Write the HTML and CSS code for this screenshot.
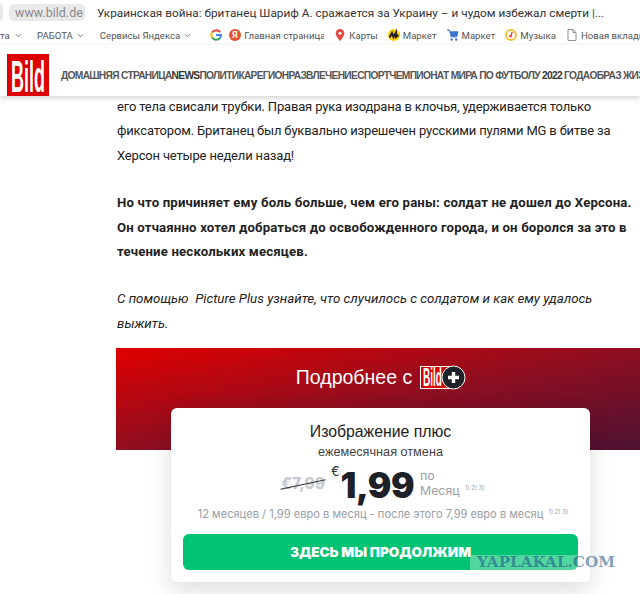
FILE: index.html
```html
<!DOCTYPE html>
<html lang="en">
<head>
    <meta charset="UTF-8">
    <meta name="viewport" content="width=device-width, initial-scale=1.0">
    <title>Bild</title>
    <link rel="stylesheet" href="styles.css">
</head>
<body>
    <div class="tabbar">
        <span class="stub"></span>
        <span class="domain">www.bild.de</span>
        <span class="tab-title">Украинская война: британец Шариф А. сражается за Украину – и чудом избежал смерти |...</span>
    </div>
    <div class="bookmarks">
        <span class="bm cut">та <svg class="chev" viewBox="0 0 8 5"><path d="M1 1l3 3 3-3"/></svg></span>
        <span class="bm work">РАБОТА <svg class="chev" viewBox="0 0 8 5"><path d="M1 1l3 3 3-3"/></svg></span>
        <span class="bm yandex">Сервисы Яндекса <svg class="chev" viewBox="0 0 8 5"><path d="M1 1l3 3 3-3"/></svg></span>
        <span class="bm google">
            <svg class="ico" viewBox="0 0 12 12">
                <path d="M10.2 3.2A5 5 0 0 0 2.2 3.4" fill="none" stroke="#ea4335" stroke-width="2"/>
                <path d="M2.2 3.2a5 5 0 0 0 0 5.6" fill="none" stroke="#fbbc05" stroke-width="2"/>
                <path d="M2.2 8.6a5 5 0 0 0 7.6 .6" fill="none" stroke="#34a853" stroke-width="2"/>
                <path d="M6 6h5a5 5 0 0 1-1.4 3.4" fill="none" stroke="#4285f4" stroke-width="2"/>
            </svg>
        </span>
        <span class="bm home">
            <svg class="ico" viewBox="0 0 12 12"><circle cx="6" cy="6" r="6" fill="#e8512c"/><text x="6" y="9.2" class="ya">Я</text></svg>
            <span class="clip">Главная страница</span>
        </span>
        <span class="bm">
            <svg class="ico" viewBox="0 0 12 14"><path d="M6 0a5 5 0 0 0-5 5c0 3.5 5 9 5 9s5-5.500 5-9a5 5 0 0 0-5-5z" fill="#e8453c"/><circle cx="6" cy="5" r="1.800" fill="#fff"/></svg>
            Карты
        </span>
        <span class="bm">
            <svg class="ico" viewBox="0 0 12 12"><circle cx="6" cy="6" r="6" fill="#fc0"/><path d="M1.500 8.500L4 4l1.500 4L8 3.500 8 8l2.500-2" fill="none" stroke="#222" stroke-width="2"/></svg>
            Маркет
        </span>
        <span class="bm">
            <svg class="ico" viewBox="0 0 13 13"><path d="M0 1h2.500l2 7.500h6L12 3H3.500" fill="#3f73c9" stroke="#3f73c9"/><circle cx="5" cy="11.300" r="1.300" fill="#3f73c9"/><circle cx="10" cy="11.300" r="1.300" fill="#3f73c9"/></svg>
            Маркет
        </span>
        <span class="bm">
            <svg class="ico" viewBox="0 0 12 12"><circle cx="6" cy="6" r="5" fill="#fff" stroke="#f5c33b" stroke-width="2"/><circle cx="5.500" cy="7" r="1.500" fill="#e8453c"/><path d="M6.500 7V3.500l2 .5" fill="none" stroke="#e8453c"/></svg>
            Музыка
        </span>
        <span class="bm">
            <svg class="ico" viewBox="0 0 10 12"><path d="M1 .5h5l3 3v8H1zM6 .5v3h3" fill="#fff" stroke="#777" stroke-width=".8"/></svg>
            Новая вкладка
        </span>
    </div>

    <header class="site-head">
        <svg class="logo" viewBox="0 0 42 42">
            <rect width="42" height="42" fill="#de0000"/>
            <text x="21" y="38" class="logo-text" textLength="34" lengthAdjust="spacingAndGlyphs">Bild</text>
        </svg>
        <nav class="nav">
            <span>ДОМАШНЯЯ СТРАНИЦА</span><b>NEWS</b><span>ПОЛИТИКА</span><span>РЕГИОН</span><span>РАЗВЛЕЧЕНИЕ</span><span>СПОРТ</span><span>ЧЕМПИОНАТ МИРА ПО ФУТБОЛУ <b>2022</b> ГОДА</span><span>ОБРАЗ ЖИЗНИ</span>
        </nav>
    </header>

    <main class="article">
        <p>его тела свисали трубки. Правая рука изодрана в клочья, удерживается только<br>фиксатором. Британец был буквально изрешечен русскими пулями MG в битве за<br>Херсон четыре недели назад!</p>
        <p class="strong">Но что причиняет ему боль больше, чем его раны: солдат не дошел до Херсона.<br>Он отчаянно хотел добраться до освобожденного города, и он боролся за это в<br>течение нескольких месяцев.</p>
        <p class="em">С помощью &nbsp;Picture Plus узнайте, что случилось с солдатом и как ему удалось<br>выжить.</p>
    </main>

    <section class="promo">
        <div class="promo-title">
            Подробнее с
            <svg class="plus-logo" viewBox="0 0 46 25">
                <rect x=".5" y="1.500" width="30" height="22" fill="#d40000" stroke="#fff"/>
                <text x="12.500" y="21" class="plus-text" textLength="19" lengthAdjust="spacingAndGlyphs">Bild</text>
                <circle cx="33.500" cy="12.500" r="11.500" fill="#1e2128" stroke="#fff"/>
                <path d="M33.500 7v11M28 12.500h11" stroke="#fff" stroke-width="3.400"/>
            </svg>
        </div>
        <div class="card">
            <div class="plan">Изображение плюс</div>
            <div class="plan-sub">ежемесячная отмена</div>
            <div class="price-row">
                <span class="old">€7,99</span>
                <span class="euro">€</span>
                <span class="price">1,99</span>
                <span class="per">по<br>Месяц <sup>1) 2) 3)</sup></span>
            </div>
            <div class="terms">12 месяцев / 1,99 евро в месяц - после этого 7,99 евро в месяц <sup>1) 2) 3)</sup></div>
            <button class="go">ЗДЕСЬ МЫ ПРОДОЛЖИМ</button>
        </div>
    </section>

    <div class="watermark">YAPLAKAL.COM</div>
</body>
</html>
```

FILE: styles.css
```css
body {
    margin: 0;
    width: 640px;
    height: 594px;
    overflow: hidden;
    position: relative;
    background: #fff;
    font-family: "Liberation Sans", Arial, sans-serif;
    color: #222;
}
.tabbar {
    height: 25px;
    display: flex;
    align-items: center;
    font-family: Roboto, sans-serif;
    background: #fff;
    white-space: nowrap;
}
.stub {
    width: 3px;
    height: 17px;
    background: #e9e9e9;
    border-radius: 0 5px 5px 0;
    margin-right: 6px;
}
.domain {
    background: #e9e9e9;
    color: #8a8a8a;
    border-radius: 5px;
    padding: 0 6px;
    height: 17px;
    line-height: 17px;
    width: 64px;
    margin-right: 12px;
    font-size: 12.5px;
}
.tab-title {
    color: #333;
    font-size: 11.8px;
}
.bookmarks {
    height: 20px;
    display: flex;
    align-items: center;
    gap: 10px;
    font-family: Roboto, sans-serif;
    font-size: 9.6px;
    color: #555;
    white-space: nowrap;
    overflow: hidden;
}
.bm {
    display: inline-flex;
    align-items: center;
    gap: 3px;
    flex: none;
}
.bm.cut {
    width: 24px;
}
.bm.work {
    margin-left: 3px;
    gap: 2px;
}
.bm.yandex {
    margin-left: 6px;
    gap: 2px;
}
.bm.google {
    margin-left: 9px;
    margin-right: -3px;
}
.clip {
    width: 80px;
    overflow: hidden;
}
.chev {
    width: 7px;
    height: 5px;
    margin-left: 2px;
    fill: none;
    stroke: #666;
    stroke-width: 1;
}
.ico {
    width: 12px;
    height: 12px;
    flex: none;
}
.ya {
    font-size: 9px;
    font-weight: bold;
    fill: #fff;
    text-anchor: middle;
}
.site-head {
    height: 51px;
    display: flex;
    align-items: flex-end;
    gap: 12px;
    padding-left: 7px;
    background: #fff;
    box-shadow: 0 2px 5px rgba(0, 0, 0, 0.18);
    overflow: hidden;
    position: relative;
}
.logo {
    width: 42px;
    height: 42px;
    flex: none;
}
.logo-text {
    font-family: "Liberation Sans", sans-serif;
    font-weight: bold;
    font-size: 44px;
    fill: #fff;
    text-anchor: middle;
}
.nav {
    display: flex;
    white-space: nowrap;
    font-size: 10.2px;
    letter-spacing: -0.68px;
    font-weight: bold;
    color: #555;
    margin-bottom: 15px;
}
.nav b {
    color: #333;
}
.article {
    margin-top: -1px;
    padding-left: 117px;
    font-family: Roboto, sans-serif;
    font-size: 13px;
    letter-spacing: -0.17px;
    line-height: 24.4px;
    color: #222;
    white-space: nowrap;
}
.article p {
    margin: 0 0 23px;
}
.article .strong {
    font-size: 13.2px;
    letter-spacing: 0.16px;
    font-weight: bold;
}
.article .em {
    margin-bottom: 12px;
    font-size: 13.3px;
    letter-spacing: 0;
    font-style: italic;
}
.promo {
    margin-left: 116px;
    height: 102px;
    background: linear-gradient(to bottom right, #e00000 0%, #8f0e20 50%, #4d1232 100%);
    display: flex;
    flex-direction: column;
    align-items: center;
    position: relative;
}
.promo-title {
    margin-top: 17px;
    margin-left: 6px;
    font-size: 19.5px;
    color: #fff;
    display: flex;
    align-items: center;
    gap: 8px;
}
.plus-logo {
    width: 46px;
    height: 25px;
}
.plus-text {
    font-family: "Liberation Sans", sans-serif;
    font-weight: bold;
    font-size: 26px;
    fill: #fff;
    text-anchor: middle;
}
.card {
    position: absolute;
    left: 55px;
    top: 60px;
    width: 419px;
    height: 174px;
    box-sizing: border-box;
    padding: 15px 12px 0;
    background: #fff;
    border-radius: 6px;
    box-shadow: 0 8px 24px rgba(0, 0, 0, 0.14);
    text-align: center;
}
.plan {
    font-size: 15.8px;
    color: #222;
    line-height: 18px;
}
.plan-sub {
    font-size: 12.7px;
    margin-top: 3px;
    color: #444;
    line-height: 16px;
}
.price-row {
    display: flex;
    justify-content: center;
    align-items: flex-start;
    height: 40px;
    margin-top: 3px;
    margin-left: 5px;
    font-family: Inter, sans-serif;
}
.old {
    position: relative;
    font-size: 15.5px;
    font-weight: 800;
    color: #c6cad0;
    margin-top: 11px;
    margin-right: 6px;
}
.old::after {
    content: "";
    position: absolute;
    left: -1px;
    right: -1px;
    top: 10px;
    border-top: 1px solid #333;
    transform: rotate(-12deg);
}
.euro {
    font-size: 13px;
    color: #333;
    margin-right: 1px;
}
.price {
    font-size: 35px;
    font-weight: 900;
    color: #1e2128;
    line-height: 38px;
    margin-top: 3px;
    margin-right: 6px;
    letter-spacing: -0.5px;
}
.per {
    font-size: 12.3px;
    line-height: 15px;
    color: #9a9ea6;
    text-align: left;
    margin-top: 5px;
}
sup {
    font-size: 6px;
    margin-left: 2px;
    line-height: 0;
}
.terms {
    font-family: Inter, sans-serif;
    font-size: 11.1px;
    color: #9a9ea6;
    margin-top: 3px;
    margin-left: 5px;
    line-height: 16px;
    white-space: nowrap;
}
.go {
    display: block;
    width: 100%;
    height: 36px;
    margin-top: 12px;
    border: none;
    border-radius: 6px;
    background: #00c373;
    color: #fff;
    font-family: Inter, sans-serif;
    font-size: 13.5px;
    font-weight: 900;
}
.watermark {
    position: absolute;
    left: 470px;
    top: 555px;
    width: 108px;
    height: 15px;
    background: rgba(255, 255, 255, 0.32);
    padding-left: 7px;
    box-sizing: border-box;
    font-family: "DejaVu Serif", serif;
    font-weight: bold;
    font-size: 15.2px;
    line-height: 15px;
    color: rgba(20, 80, 130, 0.55);
    white-space: nowrap;
}
```
